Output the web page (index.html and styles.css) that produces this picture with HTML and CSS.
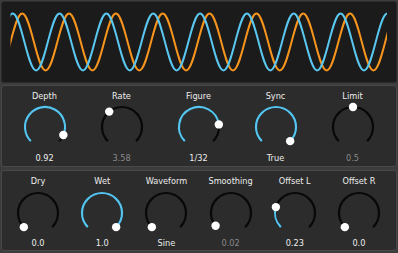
FILE: index.html
```html
<!DOCTYPE html>
<html>
<head>
<meta charset="utf-8">
<link rel="stylesheet" href="styles.css">
</head>
<body>
<div class="app">
  <div class="scope">
    <svg class="wave" width="394" height="80" viewBox="2 2 394 80">
      <defs><clipPath id="clip"><rect x="10.5" y="0" width="376.5" height="90"/></clipPath></defs>
      <g clip-path="url(#clip)">
        <path class="orange" d="M-24.64 13.5
          c4.239 0 7.893 13.9 11.71 28.5 c3.82 14.6 7.473 28.5 11.71 28.5 c4.239 0 7.893 -13.9 11.71 -28.5 c3.82 -14.6 7.473 -28.5 11.71 -28.5
          c4.239 0 7.893 13.9 11.71 28.5 c3.82 14.6 7.473 28.5 11.71 28.5 c4.239 0 7.893 -13.9 11.71 -28.5 c3.82 -14.6 7.473 -28.5 11.71 -28.5
          c4.239 0 7.893 13.9 11.71 28.5 c3.82 14.6 7.473 28.5 11.71 28.5 c4.239 0 7.893 -13.9 11.71 -28.5 c3.82 -14.6 7.473 -28.5 11.71 -28.5
          c4.239 0 7.893 13.9 11.71 28.5 c3.82 14.6 7.473 28.5 11.71 28.5 c4.239 0 7.893 -13.9 11.71 -28.5 c3.82 -14.6 7.473 -28.5 11.71 -28.5
          c4.239 0 7.893 13.9 11.71 28.5 c3.82 14.6 7.473 28.5 11.71 28.5 c4.239 0 7.893 -13.9 11.71 -28.5 c3.82 -14.6 7.473 -28.5 11.71 -28.5
          c4.239 0 7.893 13.9 11.71 28.5 c3.82 14.6 7.473 28.5 11.71 28.5 c4.239 0 7.893 -13.9 11.71 -28.5 c3.82 -14.6 7.473 -28.5 11.71 -28.5
          c4.239 0 7.893 13.9 11.71 28.5 c3.82 14.6 7.473 28.5 11.71 28.5 c4.239 0 7.893 -13.9 11.71 -28.5 c3.82 -14.6 7.473 -28.5 11.71 -28.5
          c4.239 0 7.893 13.9 11.71 28.5 c3.82 14.6 7.473 28.5 11.71 28.5 c4.239 0 7.893 -13.9 11.71 -28.5 c3.82 -14.6 7.473 -28.5 11.71 -28.5
          c4.239 0 7.893 13.9 11.71 28.5 c3.82 14.6 7.473 28.5 11.71 28.5 c4.239 0 7.893 -13.9 11.71 -28.5 c3.82 -14.6 7.473 -28.5 11.71 -28.5"/>
        <path class="blue" d="M-34.14 13.5
          c4.239 0 7.893 13.9 11.71 28.5 c3.82 14.6 7.473 28.5 11.71 28.5 c4.239 0 7.893 -13.9 11.71 -28.5 c3.82 -14.6 7.473 -28.5 11.71 -28.5
          c4.239 0 7.893 13.9 11.71 28.5 c3.82 14.6 7.473 28.5 11.71 28.5 c4.239 0 7.893 -13.9 11.71 -28.5 c3.82 -14.6 7.473 -28.5 11.71 -28.5
          c4.239 0 7.893 13.9 11.71 28.5 c3.82 14.6 7.473 28.5 11.71 28.5 c4.239 0 7.893 -13.9 11.71 -28.5 c3.82 -14.6 7.473 -28.5 11.71 -28.5
          c4.239 0 7.893 13.9 11.71 28.5 c3.82 14.6 7.473 28.5 11.71 28.5 c4.239 0 7.893 -13.9 11.71 -28.5 c3.82 -14.6 7.473 -28.5 11.71 -28.5
          c4.239 0 7.893 13.9 11.71 28.5 c3.82 14.6 7.473 28.5 11.71 28.5 c4.239 0 7.893 -13.9 11.71 -28.5 c3.82 -14.6 7.473 -28.5 11.71 -28.5
          c4.239 0 7.893 13.9 11.71 28.5 c3.82 14.6 7.473 28.5 11.71 28.5 c4.239 0 7.893 -13.9 11.71 -28.5 c3.82 -14.6 7.473 -28.5 11.71 -28.5
          c4.239 0 7.893 13.9 11.71 28.5 c3.82 14.6 7.473 28.5 11.71 28.5 c4.239 0 7.893 -13.9 11.71 -28.5 c3.82 -14.6 7.473 -28.5 11.71 -28.5
          c4.239 0 7.893 13.9 11.71 28.5 c3.82 14.6 7.473 28.5 11.71 28.5 c4.239 0 7.893 -13.9 11.71 -28.5 c3.82 -14.6 7.473 -28.5 11.71 -28.5
          c4.239 0 7.893 13.9 11.71 28.5 c3.82 14.6 7.473 28.5 11.71 28.5 c4.239 0 7.893 -13.9 11.71 -28.5 c3.82 -14.6 7.473 -28.5 11.71 -28.5"/>
      </g>
    </svg>
  </div>

  <div class="panel five">
    <div class="knob">
      <div class="label">Depth</div>
      <svg class="dial" width="50" height="44" viewBox="0 0 50 44">
        <path class="track" d="M10.86 36.14A20 20 0 1 1 39.14 36.14"/>
        <path class="fill" d="M10.86 36.14A20 20 0 1 1 43.36 29.94"/>
        <circle class="handle" cx="43.36" cy="29.94" r="4.2"/>
      </svg>
      <div class="val">0.92</div>
    </div>
    <div class="knob">
      <div class="label">Rate</div>
      <svg class="dial" width="50" height="44" viewBox="0 0 50 44">
        <path class="track" d="M10.86 36.14A20 20 0 1 1 39.14 36.14"/>
        <circle class="handle" cx="12.22" cy="6.61" r="4.2"/>
      </svg>
      <div class="val dim">3.58</div>
    </div>
    <div class="knob">
      <div class="label">Figure</div>
      <svg class="dial" width="50" height="44" viewBox="0 0 50 44">
        <path class="track" d="M10.86 36.14A20 20 0 1 1 39.14 36.14"/>
        <path class="fill" d="M10.86 36.14A20 20 0 1 1 44.83 19.42"/>
        <circle class="handle" cx="44.83" cy="19.42" r="4.2"/>
      </svg>
      <div class="val">1/32</div>
    </div>
    <div class="knob">
      <div class="label">Sync</div>
      <svg class="dial" width="50" height="44" viewBox="0 0 50 44">
        <path class="track" d="M10.86 36.14A20 20 0 1 1 39.14 36.14"/>
        <path class="fill" d="M10.86 36.14A20 20 0 1 1 39.14 36.14"/>
        <circle class="handle" cx="39.14" cy="36.14" r="4.2"/>
      </svg>
      <div class="val">True</div>
    </div>
    <div class="knob">
      <div class="label">Limit</div>
      <svg class="dial" width="50" height="44" viewBox="0 0 50 44">
        <path class="track" d="M10.86 36.14A20 20 0 1 1 39.14 36.14"/>
        <circle class="handle" cx="25" cy="2" r="4.2"/>
      </svg>
      <div class="val dim">0.5</div>
    </div>
  </div>

  <div class="panel six">
    <div class="knob">
      <div class="label">Dry</div>
      <svg class="dial" width="50" height="44" viewBox="0 0 50 44">
        <path class="track" d="M10.86 36.14A20 20 0 1 1 39.14 36.14"/>
        <circle class="handle" cx="10.86" cy="36.14" r="4.2"/>
      </svg>
      <div class="val">0.0</div>
    </div>
    <div class="knob">
      <div class="label">Wet</div>
      <svg class="dial" width="50" height="44" viewBox="0 0 50 44">
        <path class="track" d="M10.86 36.14A20 20 0 1 1 39.14 36.14"/>
        <path class="fill" d="M10.86 36.14A20 20 0 1 1 39.14 36.14"/>
        <circle class="handle" cx="39.14" cy="36.14" r="4.2"/>
      </svg>
      <div class="val">1.0</div>
    </div>
    <div class="knob">
      <div class="label">Waveform</div>
      <svg class="dial" width="50" height="44" viewBox="0 0 50 44">
        <path class="track" d="M10.86 36.14A20 20 0 1 1 39.14 36.14"/>
        <circle class="handle" cx="10.86" cy="36.14" r="4.2"/>
      </svg>
      <div class="val">Sine</div>
    </div>
    <div class="knob">
      <div class="label">Smoothing</div>
      <svg class="dial" width="50" height="44" viewBox="0 0 50 44">
        <path class="track" d="M10.86 36.14A20 20 0 1 1 39.14 36.14"/>
        <circle class="handle" cx="9.59" cy="34.75" r="4.2"/>
      </svg>
      <div class="val dim">0.02</div>
    </div>
    <div class="knob">
      <div class="label">Offset L</div>
      <svg class="dial" width="50" height="44" viewBox="0 0 50 44">
        <path class="track" d="M10.86 36.14A20 20 0 1 1 39.14 36.14"/>
        <path class="fill" d="M10.86 36.14A20 20 0 0 1 5.88 16.12"/>
        <circle class="handle" cx="5.88" cy="16.12" r="4.2"/>
      </svg>
      <div class="val">0.23</div>
    </div>
    <div class="knob">
      <div class="label">Offset R</div>
      <svg class="dial" width="50" height="44" viewBox="0 0 50 44">
        <path class="track" d="M10.86 36.14A20 20 0 1 1 39.14 36.14"/>
        <circle class="handle" cx="10.86" cy="36.14" r="4.2"/>
      </svg>
      <div class="val">0.0</div>
    </div>
  </div>
</div>
</body>
</html>
```

FILE: styles.css
```css
html, body {
  margin: 0;
  padding: 0;
  background: #3c3c3c;
}

.app {
  width: 398px;
  height: 253px;
  box-sizing: border-box;
  padding: 1px 1px 2px 1px;
  display: flex;
  flex-direction: column;
  gap: 2px;
  font-family: "DejaVu Sans", sans-serif;
  font-size: 8.2px;
  color: #ececec;
}

.scope {
  height: 82px;
  box-sizing: border-box;
  border: 1px solid #2b2b2b;
  border-radius: 3px;
  background: #1b1b1b;
  overflow: hidden;
}

.wave {
  display: block;
}

.wave path {
  fill: none;
  stroke-width: 2;
  stroke-linecap: round;
}

.wave .blue {
  stroke: #5ac7f0;
}

.wave .orange {
  stroke: #f7941d;
}

.panel {
  height: 82px;
  box-sizing: border-box;
  border: 1px solid #494949;
  border-radius: 3px;
  background: #2c2c2c;
  display: grid;
  padding: 0 5px 0 4px;
}

.panel.five {
  grid-template-columns: repeat(5, 1fr);
}

.panel.six {
  grid-template-columns: repeat(6, 1fr);
  height: 81px;
  margin-top: 1px;
}

.knob {
  display: flex;
  flex-direction: column;
  align-items: center;
  padding-top: 5px;
}

.label {
  height: 11px;
  line-height: 11px;
  white-space: nowrap;
}

.dial {
  display: block;
  margin-top: 3px;
  overflow: visible;
}

.six .dial {
  margin-top: 4px;
}

.dial .track {
  fill: none;
  stroke: #080808;
  stroke-width: 2.2;
}

.dial .fill {
  fill: none;
  stroke: #55c4ee;
  stroke-width: 2.2;
}

.dial .handle {
  fill: #ffffff;
}

.val {
  height: 11px;
  line-height: 11px;
  margin-top: 4px;
  white-space: nowrap;
}

.six .val {
  margin-top: 3px;
}

.val.dim {
  color: #8a8a8a;
}
```
